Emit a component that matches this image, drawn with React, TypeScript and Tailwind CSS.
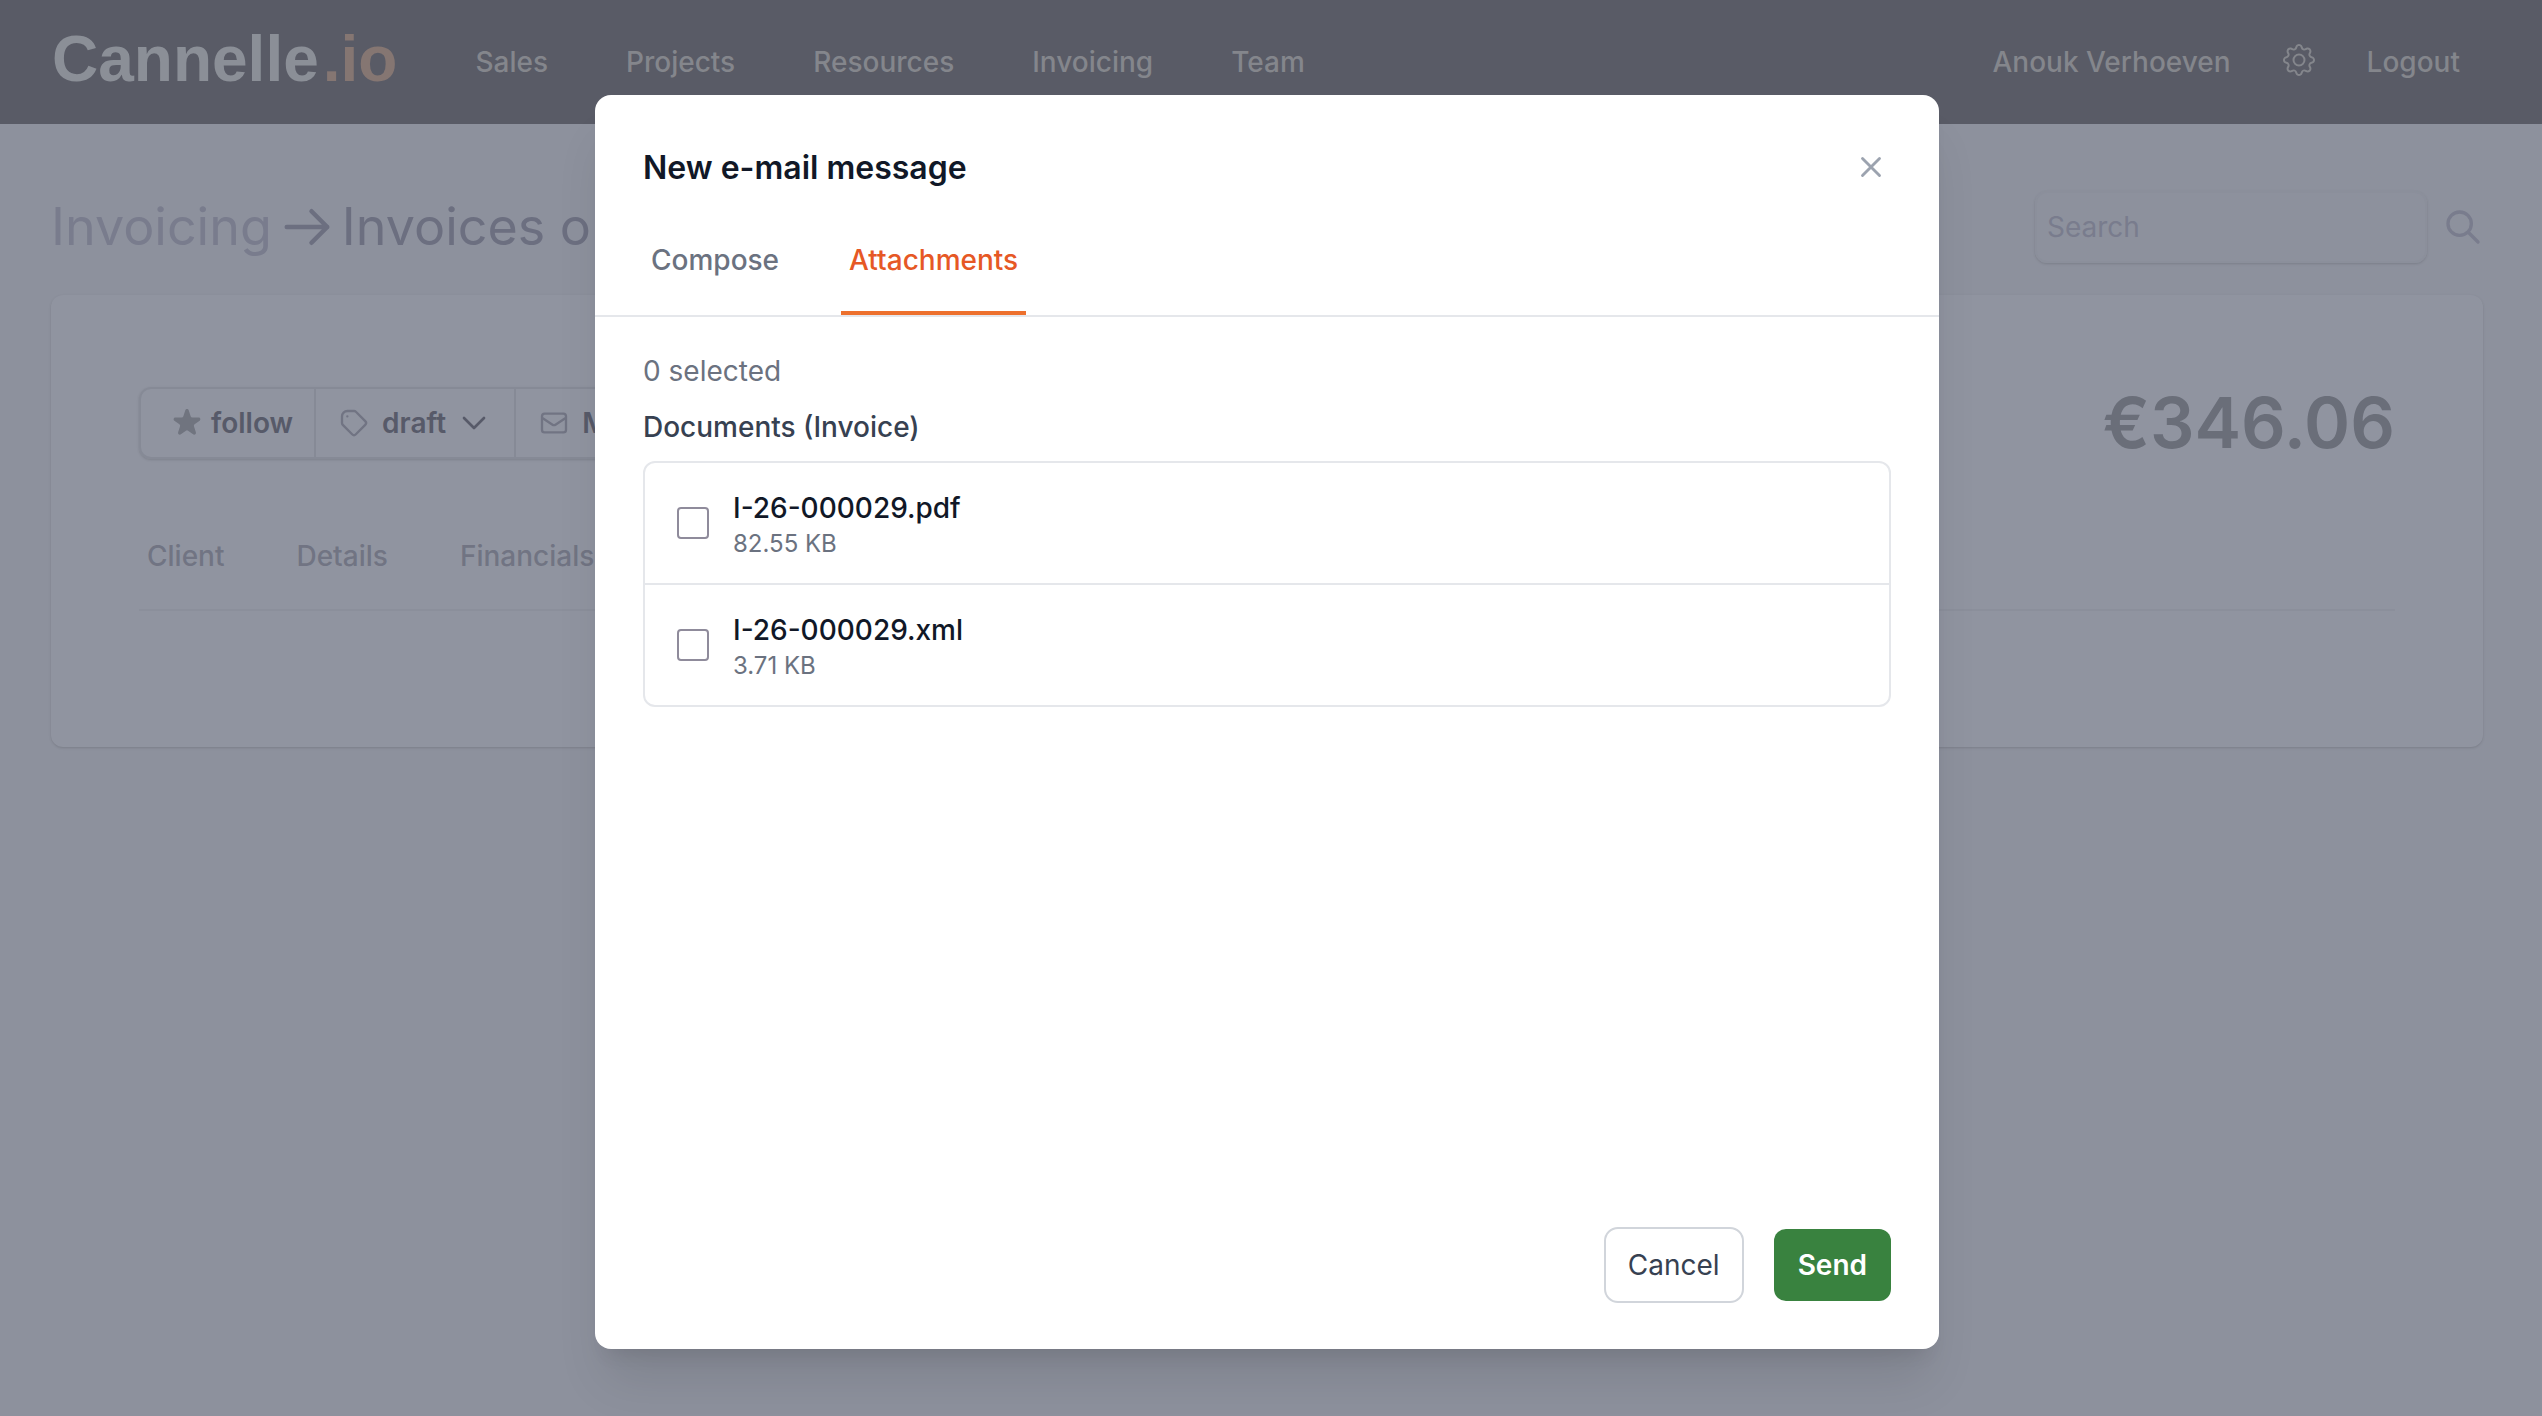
import { useState } from "react";
import type { ReactNode } from "react";
import { BsGear } from "react-icons/bs";

function Icon({ className, strokeWidth = 2, children }: { className: string; strokeWidth?: number; children: ReactNode }) {
  return (
    <svg viewBox="0 0 24 24" fill="none" stroke="currentColor" strokeWidth={strokeWidth} strokeLinecap="round" strokeLinejoin="round" className={className} aria-hidden="true">
      {children}
    </svg>
  );
}

const navItems = ["Sales", "Projects", "Resources", "Invoicing", "Team"];
const invoiceTabs = ["Client", "Details", "Financials"];
const documents = [
  { name: "I-26-000029.pdf", size: "82.55 KB" },
  { name: "I-26-000029.xml", size: "3.71 KB" },
];

function Header() {
  return (
    <header className="flex h-[124px] items-center bg-[#595b66] pr-[82px] pl-[52px] text-[28px] font-medium text-[#84868c]">
      <a href="#" className="pb-1.5 font-['Liberation_Sans',sans-serif] text-[64px] leading-[72px] font-bold text-[#8b8f97]">
        Cannelle<span className="ml-1 text-[#857672]">.io</span>
      </a>
      <nav className="ml-[78px] flex gap-[78px]">
        {navItems.map((item) => (
          <a key={item} href="#">{item}</a>
        ))}
      </nav>
      <div className="ml-auto flex items-center">
        <a href="#">Anouk Verhoeven</a>
        <button type="button" aria-label="Settings" className="mx-[52px] pb-1">
          <BsGear className="size-8" />
        </button>
        <a href="#">Logout</a>
      </div>
    </header>
  );
}

function InvoicePage() {
  return (
    <main className="px-[51px] pt-[67px]">
      <div className="flex items-center justify-between">
        <h1 className="flex items-center text-[52px] leading-[72px] text-[#6c6f80]">
          <a href="#" className="text-[#797c8d]">Invoicing</a>
          <Icon className="mx-2 size-[54px]">
            <path d="M14 5l7 7m0 0l-7 7m7-7H3" />
          </Icon>
          Invoices out
        </h1>
        <form className="flex items-center" onSubmit={(e) => e.preventDefault()}>
          <input type="search" aria-label="Search" placeholder="Search" className="h-[72px] w-[392px] rounded-xl border-2 border-[#8b8f9b] px-2.5 text-[28px] shadow-sm outline-none placeholder:text-[#797c8d]" />
          <button type="submit" aria-label="Run search" className="ml-4 text-[#797c8d]">
            <Icon className="size-10">
              <path d="M21 21l-6-6m2-5a7 7 0 11-14 0 7 7 0 0114 0z" />
            </Icon>
          </button>
        </form>
      </div>

      <section className="mt-8 rounded-xl bg-[#9094a0] px-[88px] pt-[92px] pb-[136px] shadow-sm">
        <div className="flex items-center justify-between">
          <div className="flex h-[72px] overflow-hidden rounded-xl border-2 border-[#868a96] text-[28px] font-semibold text-[#575a69] shadow-sm">
            <button type="button" className="flex items-center gap-1.5 border-r-2 border-[#868a96] pr-[21px] pl-7">
              <svg viewBox="0 0 20 20" fill="#70747f" className="size-9" aria-hidden="true">
                <path d="M9.049 2.927c.3-.921 1.603-.921 1.902 0l1.07 3.292a1 1 0 00.95.69h3.462c.969 0 1.371 1.24.588 1.81l-2.8 2.034a1 1 0 00-.364 1.118l1.07 3.292c.3.921-.755 1.688-1.54 1.118l-2.8-2.034a1 1 0 00-1.175 0l-2.8 2.034c-.784.57-1.838-.197-1.539-1.118l1.07-3.292a1 1 0 00-.364-1.118L2.98 8.72c-.783-.57-.38-1.81.588-1.81h3.461a1 1 0 00.951-.69l1.07-3.292z" />
              </svg>
              follow
            </button>
            <button type="button" className="flex items-center border-r-2 border-[#868a96] pr-6 pl-[22px]">
              <Icon className="mr-3 size-8 text-[#717483]" strokeWidth={1.75}>
                <path d="M7 7h.01M7 3h5c.512 0 1.024.195 1.414.586l7 7a2 2 0 010 2.828l-7 7a2 2 0 01-2.828 0l-7-7A1.994 1.994 0 013 12V7a4 4 0 014-4z" />
              </Icon>
              draft
              <Icon className="ml-3 size-8">
                <path d="m19.5 8.25-7.5 7.5-7.5-7.5" />
              </Icon>
            </button>
            <button type="button" className="flex items-center gap-3 px-[22px]">
              <Icon className="size-8 text-[#717483]" strokeWidth={1.75}>
                <path d="M3 8l7.89 5.26a2 2 0 002.22 0L21 8M5 19h14a2 2 0 002-2V7a2 2 0 00-2-2H5a2 2 0 00-2 2v10a2 2 0 002 2z" />
              </Icon>
              Mail
            </button>
          </div>
          <p className="text-[70px] leading-[72px] font-semibold text-[#6a6e79]">€346.06</p>
        </div>
        <nav className="mt-[77px] flex gap-[72px] border-b-2 border-[#8b8f9b] px-2 pb-[33px] text-[28px] leading-10 font-medium text-[#717483]">
          {invoiceTabs.map((tab) => (
            <a key={tab} href="#">{tab}</a>
          ))}
        </nav>
      </section>
    </main>
  );
}

function EmailDialog() {
  const [checked, setChecked] = useState<string[]>([]);
  const toggle = (name: string) =>
    setChecked((list) => (list.includes(name) ? list.filter((n) => n !== name) : [...list, name]));

  return (
    <div role="dialog" aria-modal="true" aria-labelledby="dialog-title" className="flex min-h-[1254px] w-full max-w-[1344px] flex-col rounded-2xl bg-white text-[28px] leading-10 shadow-[0_40px_50px_-10px_rgb(0_0_0/0.1),0_16px_20px_-12px_rgb(0_0_0/0.1)]">
      <div className="flex items-start justify-between px-12 pt-12">
        <h2 id="dialog-title" className="text-[32px] leading-[50px] font-semibold text-[#111827]">New e-mail message</h2>
        <button type="button" aria-label="Close" className="mt-[7px] mr-[3px] text-[#9ca3af]">
          <Icon className="size-[34px]">
            <path d="M6 18 18 6M6 6l12 12" />
          </Icon>
        </button>
      </div>
      <div role="tablist" className="mt-[47px] flex gap-[54px] border-b-2 border-[#e5e7eb] px-12 font-medium">
        <button type="button" role="tab" aria-selected="false" className="border-b-4 border-transparent px-2 pb-[31px] text-[#6b7280]">Compose</button>
        <button type="button" role="tab" aria-selected="true" className="border-b-4 border-[#ed702d] px-2 pb-[31px] text-[#e65825]">Attachments</button>
      </div>
      <div className="px-12 pt-[34px]">
        <p className="text-[#6b7280]">{checked.length} selected</p>
        <h3 className="mt-4 font-medium text-[#374151]">Documents (Invoice)</h3>
        <ul className="mt-3.5 divide-y-2 divide-[#e5e7eb] rounded-xl border-2 border-[#e5e7eb]">
          {documents.map((doc) => (
            <li key={doc.name}>
              <label className="flex h-[120px] items-center gap-6 px-8">
                <input type="checkbox" checked={checked.includes(doc.name)} onChange={() => toggle(doc.name)} className="size-8 appearance-none rounded-sm border-2 border-[#8f8b9b] checked:bg-[#e65825]" />
                <span className="flex flex-col pt-0.5">
                  <span className="font-medium text-[#111827]">{doc.name}</span>
                  <span className="text-2xl leading-8 text-[#6b7280]">{doc.size}</span>
                </span>
              </label>
            </li>
          ))}
        </ul>
      </div>
      <div className="mt-auto flex items-center justify-end gap-[30px] px-12 pb-[46px]">
        <button type="button" className="h-[76px] rounded-[14px] border-2 border-[#d1d5db] px-[22px] text-[#374151]">Cancel</button>
        <button type="button" className="h-[72px] rounded-xl bg-[#39823f] px-6 font-semibold text-white">Send</button>
      </div>
    </div>
  );
}

export default function App() {
  return (
    <div className="relative min-h-screen bg-[#8d919d] font-['Inter',sans-serif] antialiased">
      <Header />
      <div className="pr-2">
        <InvoicePage />
      </div>
      <div className="absolute inset-0 flex items-start justify-center pt-[95px] pr-2">
        <EmailDialog />
      </div>
    </div>
  );
}
